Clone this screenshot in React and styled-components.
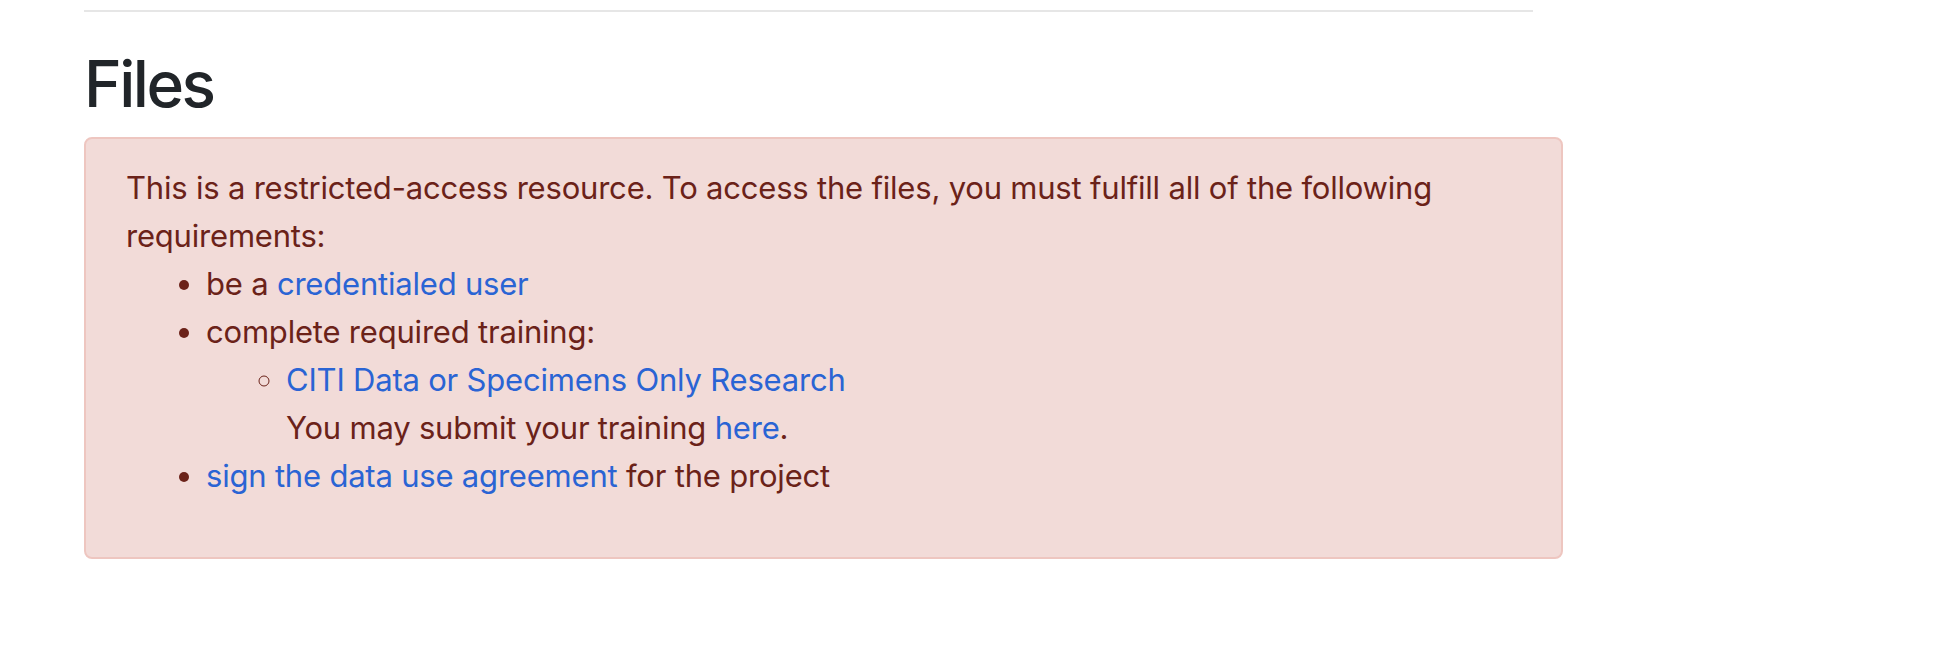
import React from "react";
import styled, { createGlobalStyle } from "styled-components";

const GlobalStyle = createGlobalStyle`
  html, body {
    margin: 0;
    padding: 0;
    background: #ffffff;
  }
  body {
    font-family: Inter, "Liberation Sans", Arial, sans-serif;
    font-size: 31px;
    line-height: 48px;
    letter-spacing: -0.2px;
    color: #212529;
  }
`;

const Page = styled.div`
  padding: 10px 0 0 84px;
  width: 1479px;
`;

const Rule = styled.hr`
  margin: 0 30px 34px 0;
  border: 0;
  border-top: 2px solid #e6e6e6;
`;

const Heading = styled.h2`
  margin: 0 0 14px;
  font-size: 64px;
  font-weight: 500;
  line-height: 1.2;
  letter-spacing: -2.5px;
  color: #212529;
`;

const Alert = styled.div`
  padding: 25px 40px 25px;
  border: 2px solid #eec6c0;
  border-radius: 8px;
  background: #f2dbd8;
  color: #6b2219;
`;

const Text = styled.p`
  margin: 0;
`;

const List = styled.ul`
  margin: 0 0 ${(p) => (p.$nested ? "0" : "32px")};
  padding-left: 80px;
  list-style-type: ${(p) => (p.$nested ? "circle" : "disc")};
`;

const Link = styled.a`
  color: #2a64d4;
  text-decoration: none;
`;

export default function App() {
  return (
    <>
      <GlobalStyle />
      <Page>
        <Rule />
        <Heading>Files</Heading>
        <Alert>
          <Text>
            This is a restricted-access resource. To access the files, you
            must fulfill all of the following requirements:
          </Text>
          <List>
            <li>
              be a <Link href="#">credentialed user</Link>
            </li>
            <li>
              complete required training:
              <List $nested>
                <li>
                  <Link href="#">CITI Data or Specimens Only Research</Link>
                  <br />
                  You may submit your training <Link href="#">here</Link>.
                </li>
              </List>
            </li>
            <li>
              <Link href="#">sign the data use agreement</Link> for the project
            </li>
          </List>
        </Alert>
      </Page>
    </>
  );
}
